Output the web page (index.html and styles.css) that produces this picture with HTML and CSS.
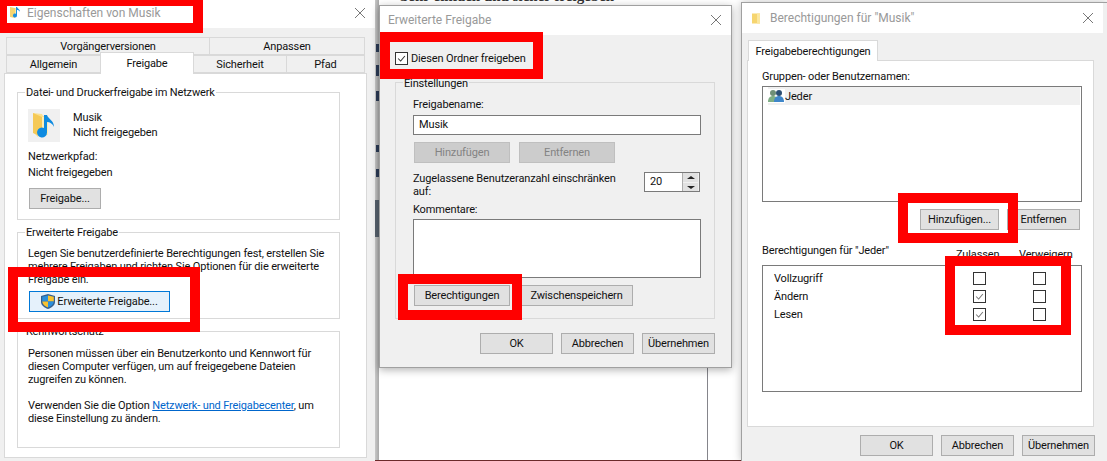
FILE: index.html
```html
<!DOCTYPE html>
<html lang="de">
<head>
    <meta charset="UTF-8">
    <meta name="viewport" content="width=device-width, initial-scale=1.0">
    <title>Freigabe Musik</title>
    <link rel="stylesheet" href="styles.css">
</head>
<body>
    <div class="desktop">
        <div class="backdrop-text">Sehr einfach und sicher freigeben</div>
        <div class="backdrop-strip">
            <span class="strip-dot strip-a"></span>
            <span class="strip-dot strip-b"></span>
            <span class="strip-dot strip-c"></span>
            <span class="strip-dot strip-d"></span>
            <span class="strip-dot strip-e"></span>
            <span class="strip-bar"></span>
        </div>
        <div class="backdrop-line"></div>
        <div class="backdrop-bottom"></div>

        <!-- Eigenschaften -->
        <div class="window win-props">
            <div class="titlebar">
                <svg class="title-icon" viewBox="0 0 12 13"><path d="M1 1l5 1v10l-5-1z" fill="#f6d56f"/><path d="M6 2h2v8H6z" fill="#fbe7a0"/><path d="M8 1v8.500a2 2 0 1 1-1-1.700V1zM8 1c1 2 3 2 3 5-.5-1.500-2-2-3-2z" fill="#1a8fe0"/></svg>
                <span class="title-text">Eigenschaften von Musik</span>
                <svg class="close" viewBox="0 0 10 10"><path d="M0 0l10 10M10 0L0 10"/></svg>
            </div>
            <div class="tabs-props">
                <div class="tab-row">
                    <div class="tab tab-vor">Vorgängerversionen</div>
                    <div class="tab tab-anp">Anpassen</div>
                </div>
                <div class="tab-row">
                    <div class="tab tab-all">Allgemein</div>
                    <div class="tab tab-frei">Freigabe</div>
                    <div class="tab tab-sich">Sicherheit</div>
                    <div class="tab tab-pfad">Pfad</div>
                </div>
            </div>
            <div class="panel panel-props">
                <div class="group group-net">
                    <span class="legend">Datei- und Druckerfreigabe im Netzwerk</span>
                    <div class="file-row">
                        <div class="file-icon">
                            <svg viewBox="0 0 32 33" width="32" height="33"><path d="M5 4l9 1 1 2h5v19l-9 0-1 2-5-5z" fill="#fbe08f"/><path d="M5 4l9 4v20L5 24z" fill="#f5c956"/><path d="M14 8h6v18h-6z" fill="#fdeeb5"/><path d="M19 6v17.500a5 5 0 1 1-3-4.500V6zM19 6c1 4 7 5 7 12-1-3-4-5-7-5z" fill="#0f8be0"/></svg>
                        </div>
                        <div class="file-text">Musik<br>Nicht freigegeben</div>
                    </div>
                    <div class="net-path">Netzwerkpfad:</div>
                    <div class="net-path">Nicht freigegeben</div>
                    <button class="btn btn-freigabe">Freigabe...</button>
                </div>
                <div class="group group-adv">
                    <span class="legend">Erweiterte Freigabe</span>
                    <p class="para">Legen Sie benutzerdefinierte Berechtigungen fest, erstellen Sie<br>mehrere Freigaben und richten Sie Optionen für die erweiterte<br>Freigabe ein.</p>
                    <button class="btn btn-adv">
                        <svg class="shield" viewBox="0 0 14 15" width="14" height="15"><path d="M7 0l7 2v6c0 3-3 5.500-7 7-4-1.500-7-4-7-7V2z" fill="#35608f"/><path d="M7 1.500V7.500H1.200V2.800z" fill="#2a8fdc"/><path d="M7 1.500l5.800 1.300V7.500H7z" fill="#f8c330"/><path d="M1.200 7.500H7v6C4 12.300 1.500 10.500 1.200 7.500z" fill="#f8c330"/><path d="M7 7.500h5.800c-.3 3-2.800 4.800-5.800 6z" fill="#2a8fdc"/></svg>
                        Erweiterte Freigabe...
                    </button>
                </div>
                <div class="group group-pass">
                    <span class="legend">Kennwortschutz</span>
                    <p class="para">Personen müssen über ein Benutzerkonto und Kennwort für<br>diesen Computer verfügen, um auf freigegebene Dateien<br>zugreifen zu können.</p>
                    <p class="para para-link">Verwenden Sie die Option <a href="#">Netzwerk- und Freigabecenter</a>, um<br>diese Einstellung zu ändern.</p>
                </div>
            </div>
            <div class="mark mark-title"></div>
            <div class="mark mark-adv"></div>
        </div>

        <!-- Erweiterte Freigabe -->
        <div class="window win-adv">
            <div class="titlebar">
                <span class="title-text">Erweiterte Freigabe</span>
                <svg class="close" viewBox="0 0 10 10"><path d="M0 0l10 10M10 0L0 10"/></svg>
            </div>
            <label class="share-check">
                <span class="check checked"><svg viewBox="0 0 13 13"><path d="M2.500 6.500l3 3 5-6"/></svg></span>
                Diesen Ordner freigeben
            </label>
            <div class="group group-settings">
                <span class="legend">Einstellungen</span>
                <div class="field-label">Freigabename:</div>
                <div class="textbox">Musik</div>
                <div class="btn-row">
                    <button class="btn btn-std" disabled>Hinzufügen</button>
                    <button class="btn btn-std" disabled>Entfernen</button>
                </div>
                <div class="limit-row">
                    <div class="limit-text">Zugelassene Benutzeranzahl einschränken<br>auf:</div>
                    <div class="spinner">
                        <span class="spin-value">20</span>
                        <span class="spin-btns">
                            <span class="spin-up"></span>
                            <span class="spin-down"></span>
                        </span>
                    </div>
                </div>
                <div class="field-label label-comment">Kommentare:</div>
                <div class="textarea"></div>
                <div class="btn-row btn-row-perm">
                    <button class="btn btn-std">Berechtigungen</button>
                    <button class="btn btn-cache">Zwischenspeichern</button>
                </div>
            </div>
            <div class="dialog-btns">
                <button class="btn btn-dlg">OK</button>
                <button class="btn btn-dlg">Abbrechen</button>
                <button class="btn btn-dlg">Übernehmen</button>
            </div>
            <div class="mark mark-check"></div>
            <div class="mark mark-perm"></div>
        </div>

        <!-- Berechtigungen -->
        <div class="window win-perm">
            <div class="titlebar">
                <svg class="title-icon" viewBox="0 0 9 12"><path d="M0 1h8v10H0z" fill="#f6d56f"/><path d="M5 1h3v10H5z" fill="#fbe7a0"/></svg>
                <span class="title-text">Berechtigungen für "Musik"</span>
                <svg class="close" viewBox="0 0 10 10"><path d="M0 0l10 10M10 0L0 10"/></svg>
            </div>
            <div class="tab tab-single">Freigabeberechtigungen</div>
            <div class="panel panel-perm">
                <div class="field-label">Gruppen- oder Benutzernamen:</div>
                <div class="listbox">
                    <div class="list-row">
                        <svg viewBox="0 0 17 14" width="17" height="14"><circle cx="5" cy="4" r="3" fill="#6f8f76"/><path d="M0 13c0-4 2-6 5-6s5 2 5 6z" fill="#7fae85"/><circle cx="11" cy="4" r="3" fill="#2c4f73"/><path d="M6 13c0-4 2-6 5-6s5 2 5 6z" fill="#3f86c9"/></svg>
                        <span>Jeder</span>
                    </div>
                </div>
                <div class="btn-row btn-row-names">
                    <button class="btn btn-add">Hinzufügen...</button>
                    <button class="btn btn-remove">Entfernen</button>
                </div>
                <div class="perm-head">
                    <span class="perm-title">Berechtigungen für "Jeder"</span>
                    <span class="perm-col">Zulassen</span>
                    <span class="perm-col">Verweigern</span>
                </div>
                <div class="perm-box">
                    <div class="perm-row">
                        <span class="perm-name">Vollzugriff</span>
                        <span class="check"></span>
                        <span class="check"></span>
                    </div>
                    <div class="perm-row">
                        <span class="perm-name">Ändern</span>
                        <span class="check checked light"><svg viewBox="0 0 13 13"><path d="M2.500 6.500l3 3 5-6"/></svg></span>
                        <span class="check"></span>
                    </div>
                    <div class="perm-row">
                        <span class="perm-name">Lesen</span>
                        <span class="check checked light"><svg viewBox="0 0 13 13"><path d="M2.500 6.500l3 3 5-6"/></svg></span>
                        <span class="check"></span>
                    </div>
                </div>
            </div>
            <div class="dialog-btns dialog-btns-perm">
                <button class="btn btn-dlg">OK</button>
                <button class="btn btn-dlg">Abbrechen</button>
                <button class="btn btn-dlg">Übernehmen</button>
            </div>
            <div class="mark mark-add"></div>
            <div class="mark mark-checks"></div>
        </div>
    </div>
</body>
</html>
```

FILE: styles.css
```css
* {
    box-sizing: border-box;
}
html, body {
    margin: 0;
    padding: 0;
}
body {
    font-family: 'Roboto', 'Noto Sans', sans-serif;
    font-size: 11px;
    letter-spacing: -0.14px;
    color: #111;
    background: #fff;
}
.desktop {
    position: relative;
    width: 1107px;
    height: 461px;
    overflow: hidden;
    background: #fff;
}
.backdrop-text {
    position: absolute;
    left: 400px;
    top: -12px;
    font-family: 'Liberation Serif', serif;
    font-size: 15px;
    font-weight: bold;
    letter-spacing: 0;
    color: #333;
}
.backdrop-strip {
    position: absolute;
    left: 375px;
    top: 0;
    width: 4px;
    height: 461px;
    background: linear-gradient(90deg, #c8c8c8, #a8a8a8);
}
.strip-dot {
    position: absolute;
    left: 1px;
    width: 3px;
    background: #2b3a55;
}
.strip-a {
    top: 44px;
    height: 8px;
}
.strip-b {
    top: 65px;
    height: 11px;
}
.strip-c {
    top: 91px;
    height: 10px;
}
.strip-d {
    top: 145px;
    height: 7px;
}
.strip-e {
    top: 169px;
    height: 8px;
}
.strip-bar {
    position: absolute;
    left: 0;
    top: 200px;
    width: 4px;
    height: 37px;
    background: #555f6b;
}
.backdrop-line {
    position: absolute;
    left: 707px;
    top: 367px;
    width: 1px;
    height: 94px;
    background: #85858b;
}
.backdrop-bottom {
    position: absolute;
    left: 375px;
    top: 460px;
    width: 366px;
    height: 1px;
    background: #6b2a2a;
}

/* windows */
.window {
    position: absolute;
    background: #f0f0f0;
}
.win-props {
    left: 0;
    top: 0;
    width: 375px;
    height: 461px;
}
.win-adv {
    left: 379px;
    top: 5px;
    width: 353px;
    height: 363px;
    border: 1px solid #a0a0a0;
    box-shadow: 0 2px 8px rgba(0, 0, 0, 0.3);
}
.win-perm {
    left: 741px;
    top: 2px;
    width: 366px;
    height: 459px;
    border-left: 1px solid #a0a0a0;
    border-top: 1px solid #a0a0a0;
    box-shadow: 0 0 8px rgba(0, 0, 0, 0.25);
}
.titlebar {
    display: flex;
    align-items: center;
    background: #fff;
    color: #999;
    font-size: 12px;
    letter-spacing: 0;
}
.win-props .titlebar {
    height: 28px;
    padding: 0 10px 3px 9px;
}
.win-adv .titlebar {
    height: 29px;
    padding: 0 10px 1px 8px;
}
.win-perm .titlebar {
    height: 30px;
    width: 361px;
    padding: 0 10px 0 10px;
}
.title-icon {
    width: 12px;
    height: 13px;
    margin-right: 6px;
}
.win-perm .title-icon {
    width: 9px;
    margin-right: 9px;
}
.title-text {
    flex: 1;
}
.close {
    width: 10px;
    height: 10px;
}
.close path {
    stroke: #777;
    stroke-width: 1;
    fill: none;
}

/* tabs */
.tabs-props {
    padding: 9px 3px 0 6px;
    height: 45px;
}
.tab-row {
    display: flex;
    height: 18px;
}
.tab {
    display: flex;
    align-items: center;
    justify-content: center;
    background: #f0f0f0;
    border: 1px solid #d9d9d9;
}
.tab-vor {
    width: 204px;
}
.tab-anp {
    width: 155px;
    border-left: none;
}
.tab-all {
    width: 94px;
    border-right: none;
}
.tab-frei {
    position: relative;
    width: 94px;
    height: 22px;
    margin-top: -3px;
    background: #fff;
    border-bottom: none;
    z-index: 1;
}
.tab-sich {
    width: 93px;
    border-left: none;
}
.tab-pfad {
    width: 78px;
    border-left: none;
}
.panel {
    background: #fff;
    border: 1px solid #d9d9d9;
}
.panel-props {
    width: 363px;
    height: 385px;
    margin-left: 4px;
    padding: 18px 26px 0 12px;
}
.group {
    position: relative;
    border: 1px solid #d9d9d9;
}
.legend {
    position: absolute;
    left: 7px;
    top: -8px;
    padding: 0 1px;
    line-height: 16px;
    background: #fff;
}
.para {
    margin: 0;
    line-height: 13px;
    white-space: nowrap;
}
.group-net {
    height: 128px;
    padding: 16px 0 0 10px;
}
.file-row {
    display: flex;
    gap: 13px;
    height: 33px;
    margin-bottom: 7px;
}
.file-icon {
    width: 32px;
    height: 33px;
    background: #f0f0f0;
}
.file-text {
    padding-top: 1px;
    line-height: 15px;
}
.net-path {
    line-height: 16px;
}
.btn {
    display: block;
    height: 21px;
    padding: 0;
    font: inherit;
    letter-spacing: inherit;
    color: #111;
    background: #e1e1e1;
    border: 1px solid #adadad;
}
.btn-freigabe {
    width: 72px;
    margin-top: 7px;
    margin-left: 1px;
}
.group-adv {
    height: 87px;
    margin-top: 12px;
    padding: 14px 0 0 10px;
}
.btn-adv {
    display: flex;
    align-items: center;
    justify-content: center;
    gap: 2px;
    width: 141px;
    margin: 5px 0 0 1px;
    background: #e5f1fb;
    border-color: #0078d7;
}
.group-pass {
    height: 117px;
    margin-top: 12px;
    padding: 15px 0 0 10px;
}
.para-link {
    margin-top: 13px;
}
.para a {
    color: #0066cc;
}

/* red highlight frames */
.mark {
    position: absolute;
    border: 10px solid #ff0000;
}
.mark-title {
    left: 0;
    top: 0;
    width: 203px;
    height: 33px;
    border-width: 6px 10px 10px 7px;
}
.mark-adv {
    left: 8px;
    top: 267px;
    width: 192px;
    height: 65px;
}
.mark-check {
    left: 0;
    top: 26px;
    width: 163px;
    height: 47px;
}
.mark-perm {
    left: 18px;
    top: 268px;
    width: 124px;
    height: 46px;
}
.mark-add {
    left: 156px;
    top: 190px;
    width: 120px;
    height: 50px;
}
.mark-checks {
    left: 203px;
    top: 253px;
    width: 126px;
    height: 79px;
}

/* checkboxes */
.check {
    display: block;
    width: 13px;
    height: 13px;
    background: #fff;
    border: 1px solid #333;
    flex: none;
}
.check svg {
    display: block;
    width: 11px;
    height: 11px;
}
.check path {
    fill: none;
    stroke: #333;
    stroke-width: 1.200;
}
.check.light path {
    stroke: #777;
}

/* erweiterte freigabe */
.share-check {
    display: flex;
    align-items: center;
    gap: 3px;
    height: 14px;
    margin: 16px 0 0 15px;
}
.group-settings {
    width: 320px;
    height: 237px;
    margin: 17px 0 0 15px;
    padding: 14px 0 0 17px;
}
.group-settings .legend {
    top: -7px;
    background: #f0f0f0;
}
.field-label {
    line-height: 16px;
}
.textbox {
    width: 288px;
    height: 20px;
    margin-top: 2px;
    padding-left: 5px;
    line-height: 18px;
    background: #fff;
    border: 1px solid #7a7a7a;
}
.btn-row {
    display: flex;
    gap: 9px;
    margin: 7px 0 0 1px;
}
.btn-std {
    width: 96px;
}
.btn-std:disabled {
    color: #838383;
    background: #ccc;
    border-color: #bfbfbf;
}
.limit-row {
    display: flex;
    justify-content: space-between;
    width: 287px;
    margin-top: 9px;
}
.limit-text {
    line-height: 13px;
    white-space: nowrap;
}
.spinner {
    display: flex;
    width: 56px;
    height: 20px;
    background: #fff;
    border: 1px solid #7a7a7a;
}
.spin-value {
    flex: 1;
    padding-left: 5px;
    line-height: 18px;
}
.spin-btns {
    display: flex;
    flex-direction: column;
    width: 17px;
    gap: 1px;
    background: #f0f0f0;
    border-left: 1px solid #adadad;
    border-right: 1px solid #f0f0f0;
}
.spin-up, .spin-down {
    position: relative;
    flex: 1;
    background: #e1e1e1;
}
.spin-up::after, .spin-down::after {
    content: '';
    position: absolute;
    left: 4px;
    top: 3px;
    border-left: 4px solid transparent;
    border-right: 4px solid transparent;
}
.spin-up::after {
    border-bottom: 3px solid #222;
}
.spin-down::after {
    border-top: 3px solid #222;
}
.label-comment {
    margin-top: 4px;
}
.textarea {
    width: 288px;
    height: 59px;
    margin-top: 1px;
    background: #fff;
    border: 1px solid #7a7a7a;
}
.btn-row-perm {
    gap: 10px;
}
.btn-cache {
    width: 113px;
}
.dialog-btns {
    display: flex;
    justify-content: flex-end;
    gap: 8px;
    padding: 14px 16px 0 0;
}
.btn-dlg {
    width: 73px;
}

/* berechtigungen */
.tab-single {
    position: relative;
    width: 130px;
    height: 21px;
    margin: 7px 0 -1px 6px;
    background: #fff;
    border-bottom: none;
    z-index: 1;
}
.panel-perm {
    width: 347px;
    height: 367px;
    margin-left: 5px;
    padding: 8px 10px 0 14px;
}
.listbox {
    width: 320px;
    height: 116px;
    margin-top: 1px;
    padding: 0 1px 0 5px;
    background: #fff;
    border: 1px solid #7a7a7a;
}
.list-row {
    display: flex;
    align-items: center;
    height: 18px;
    background: #f0f0f0;
}
.list-row svg {
    background: #fff;
}
.btn-row-names {
    gap: 8px;
    margin: 7px 0 0 158px;
}
.btn-add {
    width: 79px;
}
.btn-remove {
    width: 73px;
}
.perm-head {
    display: flex;
    height: 35px;
    padding-top: 13px;
    line-height: 16px;
}
.perm-title {
    width: 194px;
}
.perm-col {
    width: 63px;
    padding-top: 4px;
}
.perm-box {
    width: 320px;
    height: 127px;
    padding: 3px 0 0 11px;
    background: #fff;
    border: 1px solid #7a7a7a;
}
.perm-row {
    display: flex;
    align-items: center;
    gap: 47px;
    height: 18px;
}
.perm-name {
    width: 152px;
}
.dialog-btns-perm {
    justify-content: flex-start;
    padding: 8px 0 0 118px;
}
```
